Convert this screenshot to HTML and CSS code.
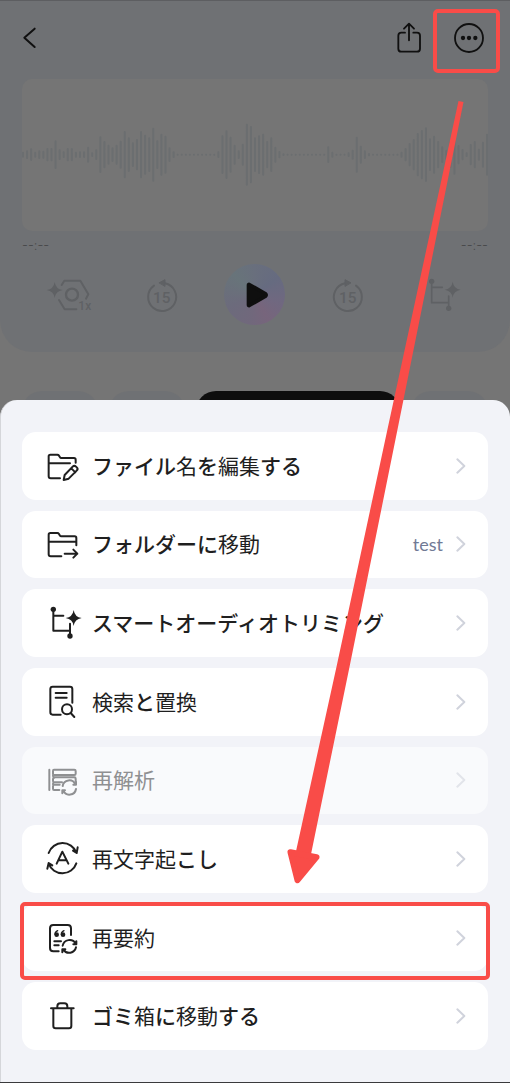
FILE: index.html
```html
<!DOCTYPE html>
<html lang="ja">
<head>
<meta charset="utf-8">
<meta name="viewport" content="width=device-width, initial-scale=1">
<title>録音メニュー</title>
<link rel="stylesheet" href="styles.css">
</head>
<body>
<div class="screen">
  <section class="player">
    <header class="topbar">
      <button class="icon-btn back" aria-label="戻る"><svg class="i-back" viewBox="66 80 48 72"><path d="M104 88 73 115 104 143" stroke-width="6"/></svg></button>
      <button class="icon-btn share" aria-label="共有"><svg class="i-48" viewBox="391 43 144 144"><path d="M451 99H440q-9 0-9 9V147q0 9 9 9H487q9 0 9-9V108q0-9-9-9H476M463 122V73M448 87 463 72 478 87" stroke-width="5.5"/></svg></button>
      <button class="icon-btn more" aria-label="その他"><svg class="i-48" viewBox="571 43 144 144"><circle cx="643" cy="115" r="42" stroke-width="5.5"/><g fill="currentColor" stroke="none"><circle cx="625" cy="115" r="6.5"/><circle cx="643" cy="115" r="6.5"/><circle cx="662" cy="115" r="6.5"/></g></svg><span class="mark mark-more"></span></button>
    </header>
    <div class="wave"><svg viewBox="0 0 1398 456" preserveAspectRatio="none" aria-hidden="true"><path id="bars"/></svg></div>
    <div class="times"><span>--:--</span><span>--:--</span></div>
    <div class="controls">
      <button class="ctl" aria-label="再生速度"><svg class="i-48" viewBox="134 93 144 144"><path d="M184 135 192 122H240L264 163 257 176M176 180 193 208H228" stroke-width="6"/><circle cx="215" cy="164" r="18" stroke-width="7"/><path fill="currentColor" stroke="none" d="M163 126Q166 147 187 150Q166 153 163 174Q160 153 139 150Q160 147 163 126Z"/><text x="234" y="211" font-size="36" font-weight="500">1x</text></svg></button>
      <button class="ctl" aria-label="15秒戻る"><svg class="i-48" viewBox="413 93 144 144"><path d="M494 130A42 42 0 1 1 461 137" stroke-width="6"/><path fill="currentColor" d="M477 128 494 119V138Z" stroke-width="3"/><text x="484" y="188" font-size="46" font-weight="500" text-anchor="middle">15</text></svg></button>
      <button class="play" aria-label="再生"><svg class="i-play" viewBox="0 0 72 78"><path fill="currentColor" stroke-width="10" d="M10 9V69Q10 72 13 71L62 43Q66 39 62 35L13 7Q10 6 10 9Z"/></svg></button>
      <button class="ctl" aria-label="15秒進む"><svg class="i-48" viewBox="208 93 144 144"><path d="M271 130A42 42 0 1 0 304 137" stroke-width="6"/><path fill="currentColor" d="M288 128 271 119V138Z" stroke-width="3"/><text x="279" y="188" font-size="46" font-weight="500" text-anchor="middle">15</text></svg></button>
      <button class="ctl" aria-label="トリミング"><svg class="i-48" viewBox="488 93 144 144"><path d="M532 124V188H583M532 142H564M583 168V205" stroke-width="5"/><path fill="currentColor" stroke="none" d="M595 125Q598 146 619 149Q598 152 595 173Q592 152 571 149Q592 146 595 125Z"/><g fill="currentColor" stroke="none"><circle cx="532" cy="124" r="8"/><circle cx="583" cy="205" r="8"/></g></svg></button>
    </div>
  </section>
  <div class="tabs"><i></i><i></i><i class="active"></i><i></i></div>

  <section class="sheet">
    <ul class="menu">
      <li><button class="item"><svg class="i-item" viewBox="66 48 120 120"><path d="M120 145H92q-6 0-6-6V79q0-5 5-5h21q3 0 5 3l3 5q1 2 4 2h38q5 0 5 5v9M86 100H150"/><path d="M131 150l3-15 24-25q5-5 10 0l3 3q4 4-1 9l-24 24zM154 115l12 12"/></svg><span class="label"><b>ファイル</b>名<b>を</b>編集<b>する</b></span><svg class="chev" viewBox="0 0 30 48"><path d="M4 4 25 24 4 44"/></svg></button></li>
      <li><button class="item"><svg class="i-item" viewBox="66 284 120 120"><path d="M124 381H92q-6 0-6-6V316q0-5 5-5h21q3 0 5 3l3 5q1 2 4 2h40q5 0 5 5V348M86 337H168M134 373H172M160 361 172 373 160 385"/></svg><span class="label"><b>フォルダーに</b>移動</span><span class="value">test</span><svg class="chev" viewBox="0 0 30 48"><path d="M4 4 25 24 4 44"/></svg></button></li>
      <li><button class="item"><svg class="i-item" viewBox="66 520 120 120"><path d="M100 540V603H150M100 558H130M150 582V619"/><path fill="currentColor" stroke="none" d="M161 541Q164 562 185 565Q164 568 161 589Q158 568 137 565Q158 562 161 541Z"/><g fill="currentColor" stroke="none"><circle cx="100" cy="539" r="8"/><circle cx="150" cy="619" r="8"/></g></svg><span class="label"><b>スマートオーディオトリミング</b></span><svg class="chev" viewBox="0 0 30 48"><path d="M4 4 25 24 4 44"/></svg></button></li>
      <li><button class="item"><svg class="i-item" viewBox="66 66 120 120"><path d="M122 164H98q-7 0-7-7V87q0-7 7-7H150q7 0 7 7V128M107 99H140M107 113H140M152 159 163 171"/><circle cx="141" cy="148" r="15"/></svg><span class="label">検索<b>と</b>置換</span><svg class="chev" viewBox="0 0 30 48"><path d="M4 4 25 24 4 44"/></svg></button></li>
      <li><button class="item" disabled><svg class="i-item" viewBox="66 301 120 120"><path d="M88 330V391M102 330H163q4 0 4 4v8q0 4-4 4H102q-3 0-3-4v-8q0-4 3-4ZM99 346q0 7 4 7H163q4 0 4 4v6M103 354q-4 0-4 4v6q0 4 4 4H126M103 368q-4 0-4 6M119 375H102q-3 0-3 4v8q0 4 3 4H118"/><path d="M128 379A20 20 0 0 1 166 374M168 388A20 20 0 0 1 130 393M168 366V375H160M127 401V392H135"/></svg><span class="label">再解析</span><svg class="chev" viewBox="0 0 30 48"><path d="M4 4 25 24 4 44"/></svg></button></li>
      <li><button class="item"><svg class="i-item" viewBox="66 537 120 120"><path d="M86 579A44 44 0 0 1 169 578M173 562 170 579 159 572M169 610A44 44 0 0 1 86 611M82 626 86 609 97 616M110 611 127 575 145 611M116 601H138"/></svg><span class="label">再文字起<b>こし</b></span><svg class="chev" viewBox="0 0 30 48"><path d="M4 4 25 24 4 44"/></svg></button></li>
      <li><button class="item"><svg class="i-item" viewBox="126 83 120 120"><path d="M176 183H160q-10 0-10-10V114q0-10 10-10H203q10 0 10 10V134M163 153H183M163 165H176"/><path d="M188 166A21 21 0 0 1 227 160M228 171A21 21 0 0 1 190 178M229 153V162H220M187 186V177H196"/><g fill="currentColor" stroke="none"><circle cx="170" cy="133" r="7"/><circle cx="189" cy="133" r="7"/></g><path stroke-width="4" d="M165 132Q165 124 173 121M184 132Q184 124 192 121"/></svg><span class="label">再要約</span><svg class="chev" viewBox="0 0 30 48"><path d="M4 4 25 24 4 44"/></svg></button><span class="mark mark-row"></span></li>
      <li><button class="item"><svg class="i-item" viewBox="126 319 120 120"><path d="M153 356H221M172 355V350q0-9 9-9H193q9 0 9 9V355M160 357V409q0 7 7 7H207q7 0 7-7V357"/></svg><span class="label"><b>ゴミ</b>箱<b>に</b>移動<b>する</b></span><svg class="chev" viewBox="0 0 30 48"><path d="M4 4 25 24 4 44"/></svg></button></li>
    </ul>
  </section>

  <svg class="arrow" viewBox="0 0 510 1083" preserveAspectRatio="none" aria-hidden="true"><path d="M458.500 101 463.500 102 398.500 425 350 665 311 855 296 852 337 665 388.500 425Z"/><path class="head" d="M290.500 853 316.500 858 297.500 881Z"/></svg>
</div>
<script src="wave.js"></script>
</body>
</html>
```
FILE: styles.css
```css
* { box-sizing: border-box; }

body {
  margin: 0;
  font-family: "Noto Sans CJK JP", "Noto Sans", sans-serif;
  color: #1f1f1f;
}

button {
  margin: 0;
  padding: 0;
  border: 0;
  background: none;
  color: inherit;
  font: inherit;
}

svg {
  display: block;
  flex: none;
  fill: none;
  stroke: currentColor;
  stroke-linecap: round;
  stroke-linejoin: round;
}

svg text {
  fill: currentColor;
  stroke: none;
  font-family: Roboto, sans-serif;
}

.screen {
  position: relative;
  display: flex;
  flex-direction: column;
  min-height: 100vh;
  background: #757575;
  border-bottom: 1px solid #3a3a3c;
}

.player {
  background: #6f7174;
  border-top: 1px solid #5d5e61;
  border-radius: 0 0 32px 32px;
  padding-bottom: 27px;
}

.topbar {
  display: flex;
  align-items: center;
  padding: 8px 10px 6px 22px;
}

.icon-btn {
  position: relative;
  display: flex;
  align-items: center;
  justify-content: center;
  width: 48px;
  height: 64px;
  padding-bottom: 6px;
  color: #101010;
}

.back {
  width: 24px;
  justify-content: flex-start;
  margin-right: auto;
}

.more {
  width: 67px;
  padding-left: 5px;
}

.i-back { width: 16px; height: 24px; }
.i-48 { width: 48px; height: 48px; }
.i-play { width: 24px; height: 26px; }

.mark {
  position: absolute;
  border: 4px solid #f94c48;
  border-radius: 5px;
  pointer-events: none;
}

.mark-more { inset: 0; }
.mark-row { inset: -2px -2px -9px; }

.wave {
  height: 152px;
  margin: 0 22px;
  border-radius: 10px;
  background: #757575;
  overflow: hidden;
}

.wave svg {
  width: 100%;
  height: 100%;
  stroke: #6b6e70;
  stroke-width: 6;
}

.times {
  display: flex;
  justify-content: space-between;
  margin: 4px 22px 0;
  font: 300 13px/20px Inter, sans-serif;
  color: #444547;
}

.controls {
  display: grid;
  grid-template-columns: repeat(5, 1fr);
  place-items: center;
  margin: 9px 22px 0;
}

.ctl { color: #5f6164; }

.play {
  display: flex;
  align-items: center;
  justify-content: center;
  width: 61px;
  height: 61px;
  padding-left: 5px;
  border-radius: 50%;
  background: conic-gradient(from 0deg, #696f7d, #666b80 15%, #706880 30%, #77657c 42%, #71687c 52%, #6c6b7c 68%, #68747a 87%, #696f7d);
  color: #0f0f0f;
}

.tabs {
  display: grid;
  grid-template-columns: 76fr 76fr 204fr 77fr;
  gap: 11px;
  height: 40px;
  margin: 39px 22px 0;
}

.tabs i {
  border-radius: 20px;
  background: #6f7174;
}

.tabs .active { background: #0e0e0e; }

.sheet {
  position: relative;
  display: flex;
  flex: 1;
  margin-top: -31px;
  padding: 32px 22px 32px 21px;
  border-left: 1px solid #d5d6da;
  border-radius: 17px 17px 0 0;
  background: #f2f3f8;
}

.menu {
  display: grid;
  flex: 1;
  grid-auto-rows: 1fr;
  gap: 11px;
  margin: 0;
  padding: 0;
  list-style: none;
}

.menu li {
  position: relative;
  display: grid;
}

.item {
  display: flex;
  align-items: center;
  min-height: 64px;
  padding: 0 22px 0 20px;
  border-radius: 14px;
  background: #fff;
  font-size: 21px;
  line-height: 32px;
  text-align: left;
}

.item:disabled {
  background: #f9fafc;
  color: #8f9092;
}

.i-item {
  width: 40px;
  height: 40px;
  margin-right: 10px;
  stroke-width: 6;
}

.label {
  flex: 1;
  padding-bottom: 2px;
  white-space: nowrap;
}

.label b { font-weight: 500; }

.value {
  margin-right: 13px;
  font-family: Lato, sans-serif;
  font-size: 18px;
  color: #717a95;
}

.chev {
  width: 10px;
  height: 16px;
  stroke: #d0d3dc;
  stroke-width: 6;
}

.item:disabled .chev { stroke: #e2e4ea; }

.arrow {
  position: absolute;
  inset: 0;
  width: 100%;
  height: 100%;
  pointer-events: none;
  fill: #f94c48;
  stroke: none;
}

.arrow .head {
  stroke: #f94c48;
  stroke-width: 6;
}
```
FILE: wave.js
```js
// Bar heights of the recording, left to right.
const levels = [
  18, 26, 38, 18, 26, 24, 40, 40, 86, 32, 20, 40, 40, 18, 20, 20, 48, 14, 32,
  110, 82, 60, 44, 60, 84, 142, 104, 74, 94, 142, 120, 104, 162, 86, 126, 114,
  44, 20, 6, 6, 6, 6, 6, 6, 6, 6, 6, 6, 20, 116, 146, 108, 60, 26, 66, 186,
  172, 104, 116, 126, 82, 104, 48, 22, 8, 6, 6, 6, 6, 6, 6, 6, 6, 6, 6, 50, 18,
  6, 6, 6, 14, 30, 108, 54, 26, 10, 6, 6, 6, 6, 6, 6, 6, 18, 40, 70, 94, 130,
  148, 164, 98, 114, 82, 50, 30, 80, 120, 58, 34, 14, 64, 82, 36, 78, 126
];
const step = 1392 / (levels.length - 1);
document.getElementById("bars").setAttribute("d", levels.map((h, i) => {
  const len = Math.max(h - 6, 0.1);
  return `M${3 + i * step} ${227 - len / 2}v${len}`;
}).join(""));
```
